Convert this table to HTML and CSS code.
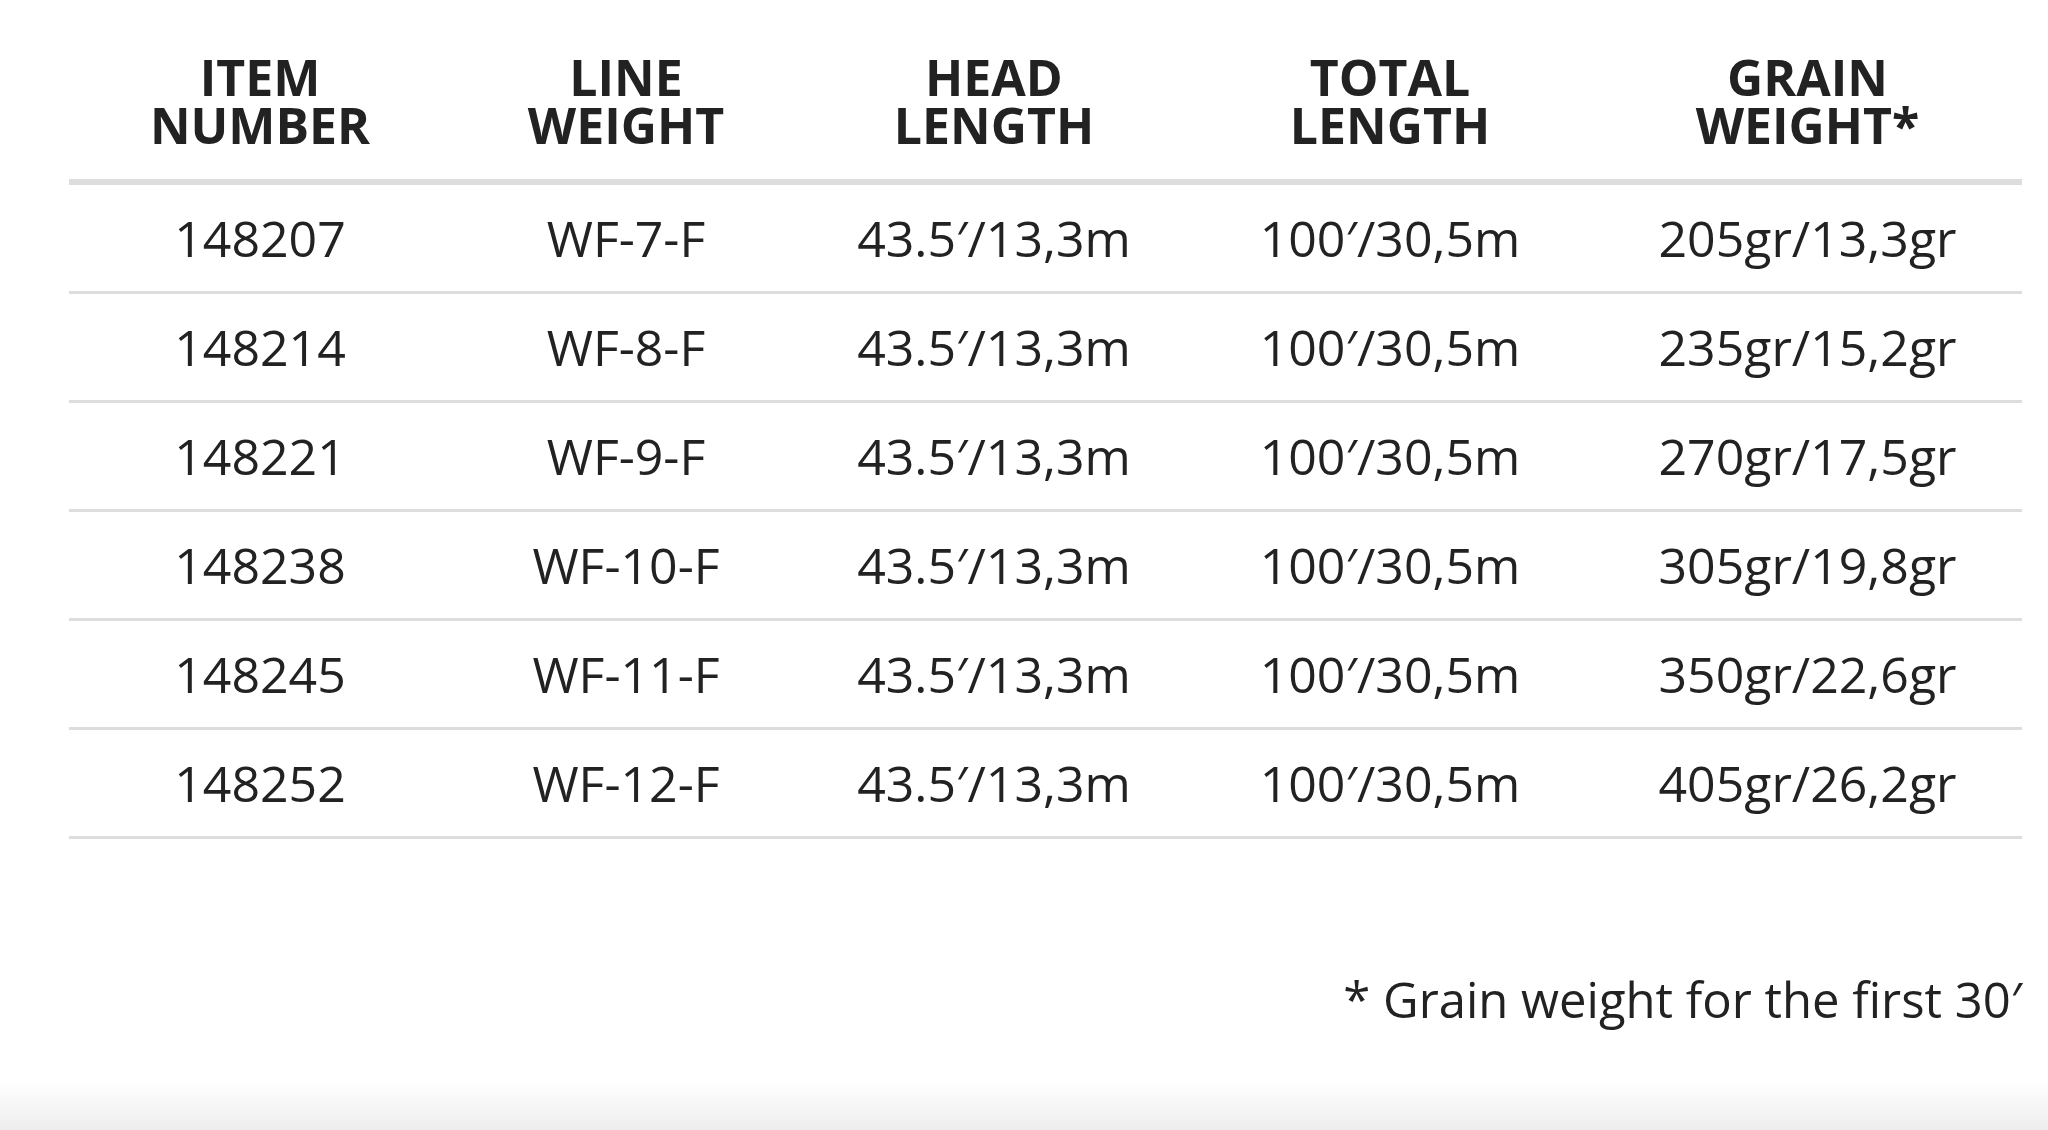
FILE: index.html
```html
<!DOCTYPE html>
<html lang="en">
<head>
<meta charset="utf-8">
<title>Line specifications</title>
<link rel="stylesheet" href="styles.css">
</head>
<body>
<main class="page">
  <table class="spec">
    <colgroup>
      <col class="c1"><col class="c2"><col class="c3"><col class="c4"><col class="c5">
    </colgroup>
    <thead>
      <tr>
        <th>ITEM<br>NUMBER</th>
        <th>LINE<br>WEIGHT</th>
        <th>HEAD<br>LENGTH</th>
        <th>TOTAL<br>LENGTH</th>
        <th>GRAIN<br>WEIGHT*</th>
      </tr>
    </thead>
    <tbody>
      <tr><td>148207</td><td>WF-7-F</td><td>43.5′/13,3m</td><td>100′/30,5m</td><td>205gr/13,3gr</td></tr>
      <tr><td>148214</td><td>WF-8-F</td><td>43.5′/13,3m</td><td>100′/30,5m</td><td>235gr/15,2gr</td></tr>
      <tr><td>148221</td><td>WF-9-F</td><td>43.5′/13,3m</td><td>100′/30,5m</td><td>270gr/17,5gr</td></tr>
      <tr><td>148238</td><td>WF-10-F</td><td>43.5′/13,3m</td><td>100′/30,5m</td><td>305gr/19,8gr</td></tr>
      <tr><td>148245</td><td>WF-11-F</td><td>43.5′/13,3m</td><td>100′/30,5m</td><td>350gr/22,6gr</td></tr>
      <tr><td>148252</td><td>WF-12-F</td><td>43.5′/13,3m</td><td>100′/30,5m</td><td>405gr/26,2gr</td></tr>
    </tbody>
  </table>
  <p class="note">* Grain weight for the first 30′</p>
</main>
</body>
</html>
```

FILE: styles.css
```css
html {
  height: 100%;
  background: #ffffff;
}
body {
  margin: 0;
  min-height: 100%;
  font-family: "Open Sans", "Liberation Sans", sans-serif;
  color: #222222;
  background: linear-gradient(to bottom, #ffffff 0, #ffffff calc(100% - 48px), #ededed 100%);
}
.page {
  padding: 0 26px 0 69px;
}
.spec {
  width: 1953px;
  border-collapse: collapse;
  table-layout: fixed;
}
.c1 { width: 382px; }
.c2 { width: 350px; }
.c3 { width: 386px; }
.c4 { width: 406px; }
.c5 { width: 429px; }
.spec th {
  font-weight: 700;
  font-size: 50px;
  line-height: 48px;
  text-align: center;
  padding: 53px 0 30px;
  border-bottom: 6px solid #dddddd;
}
.spec td {
  font-size: 50px;
  line-height: 50px;
  text-align: center;
  height: 106px;
  padding: 0;
  vertical-align: middle;
  border-bottom: 3px solid #dddddd;
}
.note {
  margin: 135px 0 0;
  font-size: 49px;
  line-height: 50px;
  text-align: right;
}
```
